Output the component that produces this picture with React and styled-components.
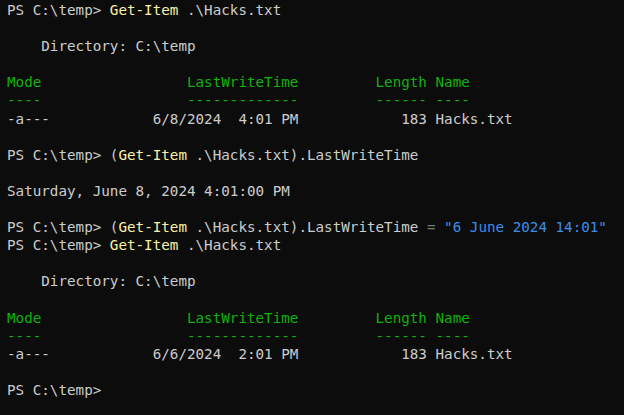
import React from 'react';
import styled, { createGlobalStyle } from 'styled-components';

const GlobalStyle = createGlobalStyle`
  html, body {
    margin: 0;
    padding: 0;
    background: #0c0c0c;
  }
`;

const Terminal = styled.div`
  width: 624px;
  height: 415px;
  box-sizing: border-box;
  padding: 1px 0 0 7px;
  background: #0c0c0c;
  color: #cccccc;
  font-family: "DejaVu Sans Mono", "Liberation Mono", monospace;
  font-size: 14.24px;
  overflow: hidden;
`;

const Line = styled.div`
  height: 18.1px;
  line-height: 18.1px;
  white-space: pre;
`;

const Cmd = styled.span`
  color: #f9f1a5;
`;

const Op = styled.span`
  color: #767676;
`;

const Str = styled.span`
  color: #3b8eea;
`;

const Head = styled.div`
  color: #13b10e;
`;

const Prompt = () => <>PS C:\temp&gt; </>;

// PowerShell table columns: LastWriteTime right-aligned to col 34, Length to col 49
const row = (mode, when, length, name) => {
  let s = mode;
  s += when.padStart(34 - s.length);
  s += length.padStart(49 - s.length);
  return s + ' ' + name;
};

function Listing({ date, time }) {
  return (
    <>
      <Line />
      <Line>{'    Directory: C:\\temp'}</Line>
      <Line />
      <Head>
        <Line>{row('Mode', 'LastWriteTime', 'Length', 'Name')}</Line>
        <Line>{row('----', '-------------', '------', '----')}</Line>
      </Head>
      <Line>{row('-a---', `${date}  ${time}`, '183', 'Hacks.txt')}</Line>
      <Line />
    </>
  );
}

export default function App() {
  return (
    <>
      <GlobalStyle />
      <Terminal>
        <Line>
          <Prompt />
          <Cmd>Get-Item</Cmd> .\Hacks.txt
        </Line>
        <Listing date="6/8/2024" time="4:01 PM" />
        <Line>
          <Prompt />(<Cmd>Get-Item</Cmd> .\Hacks.txt).LastWriteTime
        </Line>
        <Line />
        <Line>Saturday, June 8, 2024 4:01:00 PM</Line>
        <Line />
        <Line>
          <Prompt />(<Cmd>Get-Item</Cmd> .\Hacks.txt).LastWriteTime <Op>=</Op>{' '}
          <Str>"6 June 2024 14:01"</Str>
        </Line>
        <Line>
          <Prompt />
          <Cmd>Get-Item</Cmd> .\Hacks.txt
        </Line>
        <Listing date="6/6/2024" time="2:01 PM" />
        <Line>
          <Prompt />
        </Line>
      </Terminal>
    </>
  );
}
